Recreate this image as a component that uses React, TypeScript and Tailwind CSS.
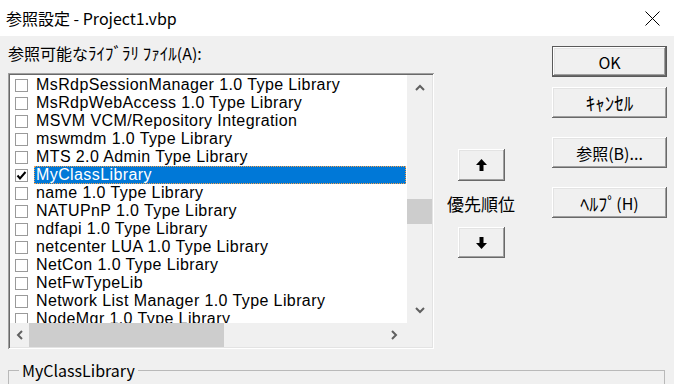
import type { ReactNode } from 'react';

const libraries = [
  'MsRdpSessionManager 1.0 Type Library',
  'MsRdpWebAccess 1.0 Type Library',
  'MSVM VCM/Repository Integration',
  'mswmdm 1.0 Type Library',
  'MTS 2.0 Admin Type Library',
  'MyClassLibrary',
  'name 1.0 Type Library',
  'NATUPnP 1.0 Type Library',
  'ndfapi 1.0 Type Library',
  'netcenter LUA 1.0 Type Library',
  'NetCon 1.0 Type Library',
  'NetFwTypeLib',
  'Network List Manager 1.0 Type Library',
  'NodeMgr 1.0 Type Library',
];

const SELECTED = 5;

const jp = "font-['Noto_Sans_CJK_JP',sans-serif]";

function ClassicButton({ children, isDefault, className }: { children: ReactNode; isDefault?: boolean; className?: string }) {
  return (
    <div
      className={`flex items-center justify-center bg-[#f0f0f0] text-[16px] text-black ${jp} ${
        isDefault
          ? 'border border-[#5a5a5a] shadow-[inset_-1px_-1px_#696969,inset_1px_1px_#ffffff,inset_-2px_-2px_#a0a0a0,inset_2px_2px_#e3e3e3]'
          : 'shadow-[inset_-1px_-1px_#696969,inset_1px_1px_#ffffff,inset_-2px_-2px_#a0a0a0,inset_2px_2px_#e3e3e3]'
      } ${className ?? ''}`}
    >
      {children}
    </div>
  );
}

function Chevron({ dir }: { dir: 'up' | 'down' | 'left' | 'right' }) {
  const points = {
    up: '1,6 5,2 9,6',
    down: '1,2 5,6 9,2',
    left: '6,1 2,5 6,9',
    right: '2,1 6,5 2,9',
  }[dir];
  const vertical = dir === 'up' || dir === 'down';
  return (
    <svg width={vertical ? 10 : 8} height={vertical ? 8 : 10} viewBox={vertical ? '0 0 10 8' : '0 0 8 10'}>
      <polyline points={points} fill="none" stroke="#606060" strokeWidth="2" />
    </svg>
  );
}

function Checkbox({ checked }: { checked: boolean }) {
  return (
    <div className="flex h-[13px] w-[13px] shrink-0 items-center justify-center border border-[#9a9a9a] bg-white">
      {checked && (
        <svg width="11" height="11" viewBox="0 0 11 11">
          <polyline points="1.5,5.5 4,8.5 9.5,2" fill="none" stroke="#000" strokeWidth="2" />
        </svg>
      )}
    </div>
  );
}

function ListBox() {
  return (
    <div className="mt-[10px] grid h-[276px] w-[426px] grid-cols-[1fr_25px] grid-rows-[1fr_24px] bg-[#f0f0f0] p-[2px] shadow-[inset_1px_1px_#a0a0a0,inset_-1px_-1px_#ffffff,inset_2px_2px_#696969,inset_-2px_-2px_#e3e3e3]">
      <div className="overflow-hidden bg-white pt-[1px] font-['Liberation_Sans',sans-serif] text-[16px] tracking-[0.4px] text-black">
        {libraries.map((name, i) => {
          const selected = i === SELECTED;
          return (
            <div key={name} className="flex h-[18px] items-center pl-[5px]">
              <Checkbox checked={selected} />
              <div
                className={`ml-[6px] flex h-[18px] flex-1 items-center whitespace-nowrap pl-[1px] leading-[18px] ${
                  selected ? 'mr-[1px] border border-dotted border-[#f5a04a] bg-[#0078d7] text-white' : 'border border-transparent'
                }`}
              >
                {name}
              </div>
            </div>
          );
        })}
      </div>
      <div className="flex flex-col bg-[#f0f0f0]">
        <div className="flex h-[26px] items-center justify-center">
          <Chevron dir="up" />
        </div>
        <div className="mt-[98px] h-[25px] bg-[#cdcdcd]" />
        <div className="flex-1" />
        <div className="flex h-[26px] items-center justify-center">
          <Chevron dir="down" />
        </div>
      </div>
      <div className="flex items-center bg-[#f0f0f0]">
        <div className="flex h-full w-[19px] items-center justify-center">
          <Chevron dir="left" />
        </div>
        <div className="h-full w-[195px] bg-[#cdcdcd]" />
        <div className="flex-1" />
        <div className="flex h-full w-[26px] items-center justify-center">
          <Chevron dir="right" />
        </div>
      </div>
      <div className="bg-[#f0f0f0]" />
    </div>
  );
}

function ArrowIcon({ up }: { up: boolean }) {
  return (
    <svg width="11" height="12" viewBox="0 0 11 12">
      {up ? (
        <>
          <polygon points="5.5,0 11,6 0,6" fill="#000" />
          <rect x="3.5" y="5" width="4" height="7" fill="#000" />
        </>
      ) : (
        <>
          <rect x="3.5" y="0" width="4" height="7" fill="#000" />
          <polygon points="5.5,12 11,6 0,6" fill="#000" />
        </>
      )}
    </svg>
  );
}

export default function App() {
  return (
    <div className="h-[384px] w-[674px] overflow-hidden bg-[#f0f0f0]">
      <div className="flex h-9 items-center justify-between bg-white pl-[6px] pr-[14px]">
        <span className={`${jp} text-[16px] text-black`}>参照設定 - Project1.vbp</span>
        <svg width="15" height="15" viewBox="0 0 15 15">
          <path d="M0.5 0.5 L14.5 14.5 M14.5 0.5 L0.5 14.5" stroke="#000" strokeWidth="1" />
        </svg>
      </div>

      <div className="flex pl-[8px]">
        <div className="w-[426px]">
          <div className={`mt-[7px] h-[20px] ${jp} text-[16px] leading-[20px] text-black`}>
            参照可能な<span className="text-[17px]">ﾗｲﾌﾞﾗﾘ ﾌｧｲﾙ</span>(A):
          </div>
          <ListBox />
        </div>

        <div className="ml-[11px] flex w-[72px] flex-col items-center pt-[113px]">
          <ClassicButton className="h-[32px] w-[47px]">
            <ArrowIcon up />
          </ClassicButton>
          <div className={`flex h-[46px] items-center ${jp} text-[17px] text-black`}>優先順位</div>
          <ClassicButton className="h-[31px] w-[47px]">
            <ArrowIcon up={false} />
          </ClassicButton>
        </div>

        <div className="ml-[35px] flex w-[115px] flex-col pt-[10px]">
          <ClassicButton isDefault className="h-[31px]">OK</ClassicButton>
          <ClassicButton className="mt-[10px] h-[31px]">
            <span className="text-[19px] leading-none">ｷｬﾝｾﾙ</span>
          </ClassicButton>
          <ClassicButton className="mt-[19px] h-[31px]">参照(B)...</ClassicButton>
          <ClassicButton className="mt-[19px] h-[31px]">
            <span className="text-[18px] leading-none">ﾍﾙﾌﾟ</span>(H)
          </ClassicButton>
        </div>
      </div>

      <fieldset className="mx-[8px] mt-[12px] mr-[9px] h-[60px] border border-[#b9b9b9]">
        <legend className={`ml-[10px] px-[3px] ${jp} text-[16px] leading-[18px] text-black`}>MyClassLibrary</legend>
      </fieldset>
    </div>
  );
}
